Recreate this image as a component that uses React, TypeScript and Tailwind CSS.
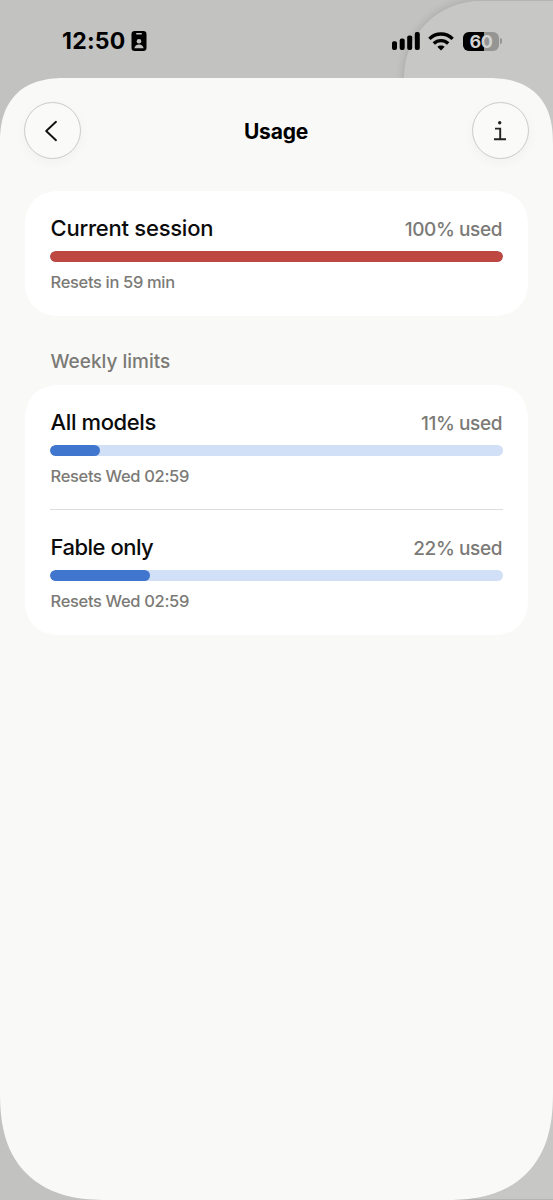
import type { ReactNode } from "react";

type Limit = {
  title: string;
  percent: number;
  resets: string;
  titleTracking: string;
};

const session: Limit = {
  title: "Current session",
  percent: 100,
  resets: "Resets in 59 min",
  titleTracking: "tracking-[-0.24px]",
};

const weekly: Limit[] = [
  {
    title: "All models",
    percent: 11,
    resets: "Resets Wed 02:59",
    titleTracking: "tracking-[-0.38px]",
  },
  {
    title: "Fable only",
    percent: 22,
    resets: "Resets Wed 02:59",
    titleTracking: "tracking-[-0.5px]",
  },
];

function StatusBar() {
  return (
    <div className="relative h-[78px]">
      {/* edge of the screen stacked behind the sheet */}
      <div className="absolute left-[404px] top-px h-[1198px] w-[240px] rounded-l-[76px] bg-[#c7c7c6] shadow-[0_0_8px_rgba(0,0,0,0.16)]" />
      <div className="relative flex h-full items-start justify-between pl-[62px] pr-[51px] pt-[30px]">
        <div className="flex h-[22px] items-center gap-[5px]">
          <span className="w-[64px] whitespace-nowrap text-[23px] font-bold leading-[22px] tracking-[0.25px] text-black">
            12:50
          </span>
          <svg width="16" height="20" viewBox="0 0 16 20">
            <rect x="0.5" y="0" width="15" height="20" rx="3.2" fill="#000" />
            <rect x="5" y="2" width="6" height="1.6" rx="0.8" fill="#c2c2c1" />
            <circle cx="8" cy="10.3" r="2.3" fill="#c2c2c1" />
            <path d="M3.4 17.2c.3-2.5 2.2-3.8 4.6-3.8s4.3 1.3 4.6 3.8z" fill="#c2c2c1" />
          </svg>
        </div>
        <div className="flex h-[22px] items-center">
          <svg width="28" height="19" viewBox="0 0 28 19">
            <rect x="0" y="9.2" width="5" height="8.8" rx="1.9" />
            <rect x="7.7" y="6.6" width="5" height="11.4" rx="1.9" />
            <rect x="15.2" y="3.4" width="5" height="14.6" rx="1.9" />
            <rect x="22.8" y="0" width="5" height="18" rx="1.9" />
          </svg>
          <svg className="ml-2" width="26" height="19" viewBox="0 0 26 19" fill="none" stroke="#000" strokeWidth="3.4">
            <path d="M1.4 6.9C7.8 .4 18.2.4 24.6 6.9" />
            <path d="M5.8 11.5c4-3.9 10.4-3.9 14.4 0" />
            <path d="M13 18.4 9.3 14.8c2-1.9 5.4-1.9 7.4 0z" fill="#000" stroke="none" />
          </svg>
          <div className="relative ml-[9px] flex h-[19px] w-[36px] items-center justify-center overflow-hidden rounded-[6px] bg-[#959594]">
            <div className="absolute inset-y-0 left-0 w-[21px] bg-black" />
            <span className="relative text-[18px] font-bold leading-[19px] tracking-[-0.3px] text-[#d2d2d1]">60</span>
          </div>
          <div className="ml-[1px] h-[6px] w-[2px] rounded-r-full bg-[#959594]" />
        </div>
      </div>
    </div>
  );
}

function RoundButton({ label, children }: { label: string; children: ReactNode }) {
  return (
    <button
      aria-label={label}
      className="flex size-[57px] items-center justify-center rounded-full border border-[#cbcbc9] bg-[#fafaf9] shadow-[0_4px_12px_rgba(0,0,0,0.035)]"
    >
      {children}
    </button>
  );
}

function Header() {
  return (
    <header className="flex items-center justify-between px-6 pt-6">
      <RoundButton label="Back">
        <svg className="mr-1" width="14" height="22" viewBox="0 0 14 22" fill="none" stroke="#111" strokeWidth="1.9" strokeLinecap="round" strokeLinejoin="round">
          <path d="M12 1.8 2.2 11 12 20.2" />
        </svg>
      </RoundButton>
      <h1 className="pr-px pt-0.5 text-[21px] font-bold leading-7 tracking-[-0.2px] text-black">Usage</h1>
      <RoundButton label="Info">
        <svg className="mr-px" width="14" height="20" viewBox="0 0 14 20" fill="none" stroke="#222" strokeWidth="1.9">
          <circle cx="6.7" cy="1.8" r="1.7" fill="#222" stroke="none" />
          <path d="M2 7.6h5.2v10.6M1 18.2h12" />
        </svg>
      </RoundButton>
    </header>
  );
}

function LimitRow({ limit }: { limit: Limit }) {
  const full = limit.percent >= 100;
  return (
    <div className="h-[125px] pt-[23px]">
      <div className="flex h-7 items-center justify-between whitespace-nowrap pl-[0.5px] pr-px">
        <h2 className={`text-[22px] font-medium text-[#0b0b0b] ${limit.titleTracking}`}>{limit.title}</h2>
        <span className="pt-[3px] text-[19px] font-medium leading-7 tracking-[-0.4px] text-[#7b7a76]">
          {limit.percent}% used
        </span>
      </div>
      <div className="mt-[9px] h-[11px] overflow-hidden rounded-full bg-[#d1e0f7]">
        <div
          className={`h-full rounded-full ${full ? "bg-[#be4742]" : "bg-[#4176cf]"}`}
          style={{ width: `${limit.percent}%` }}
        />
      </div>
      <p className="mt-[10px] pl-[0.5px] text-[16.5px] font-medium leading-5 tracking-[-0.34px] text-[#7b7a76]">
        {limit.resets}
      </p>
    </div>
  );
}

function Card({ children }: { children: ReactNode }) {
  return (
    <section className="rounded-[36px] bg-white px-[25px] [corner-shape:superellipse(1.25)]">{children}</section>
  );
}

export default function App() {
  return (
    <div className="flex h-[1200px] w-[553px] flex-col overflow-hidden bg-[#c2c2c1] font-['Inter',sans-serif]">
      <StatusBar />
      <main className="relative flex-1 rounded-b-[108px] rounded-t-[66px] bg-[#f9f9f7] [corner-shape:superellipse(1.3)]">
        <Header />
        <div className="px-[25px] pt-8">
          <Card>
            <LimitRow limit={session} />
          </Card>
          <h3 className="mb-[9px] ml-[25.5px] mt-8 text-[19px] font-medium leading-7 text-[#7b7a76]">
            Weekly limits
          </h3>
          <Card>
            <LimitRow limit={weekly[0]} />
            <div className="-mt-px h-px bg-[#dededc]" />
            <LimitRow limit={weekly[1]} />
          </Card>
        </div>
      </main>
    </div>
  );
}
